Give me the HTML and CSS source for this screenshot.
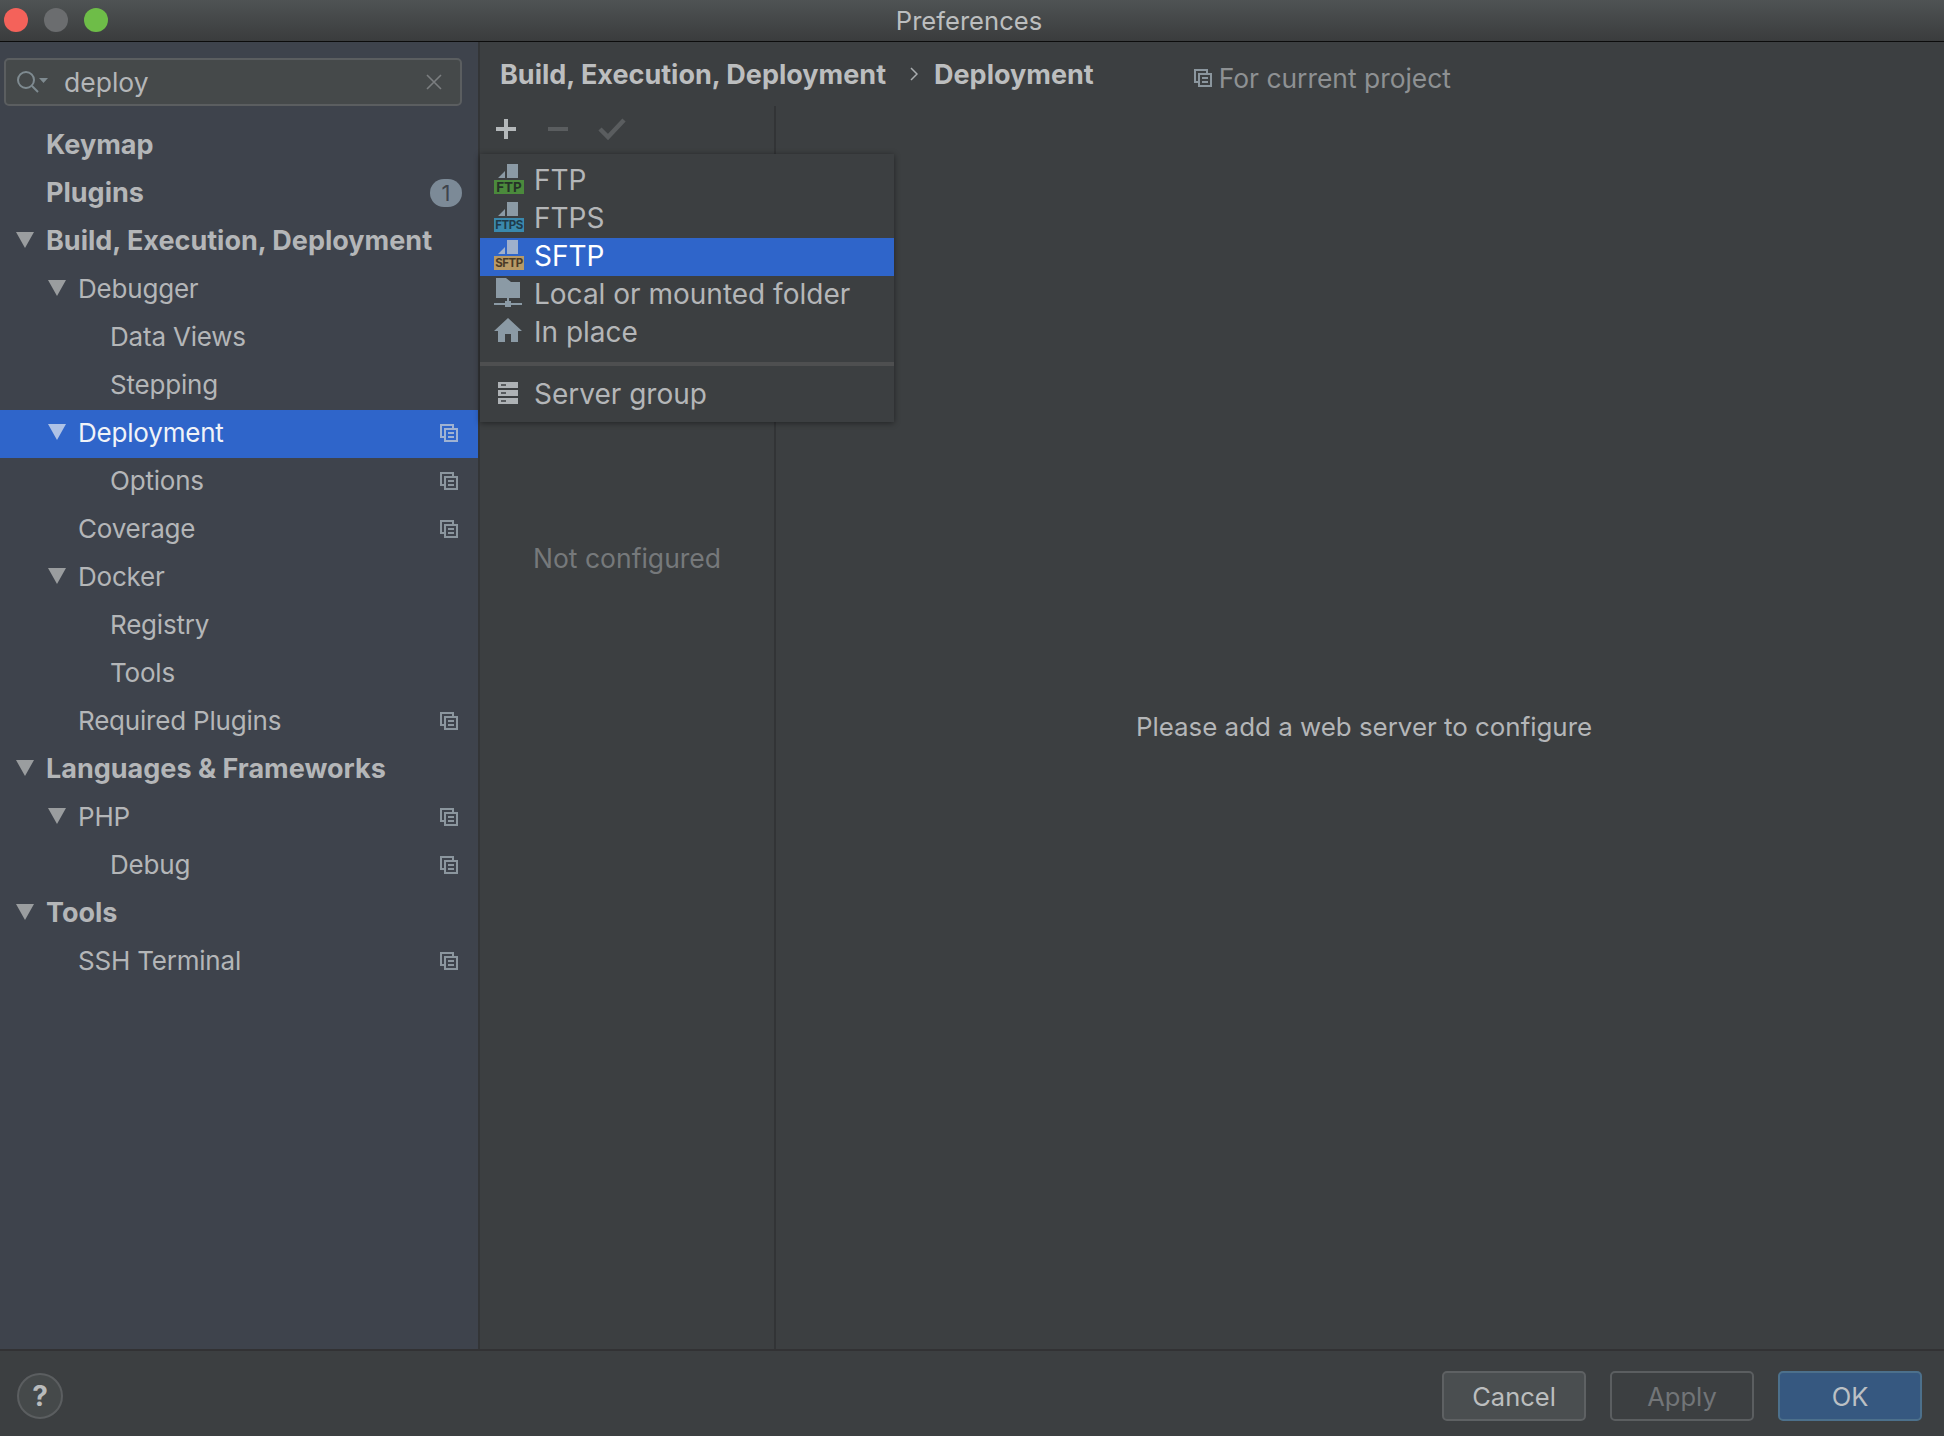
FILE: index.html
```html
<!DOCTYPE html>
<html lang="en">
<head>
<meta charset="utf-8">
<title>Preferences</title>
<link rel="stylesheet" href="styles.css">
</head>
<body>
<svg class="defs" width="0" height="0">
  <symbol id="copy" viewBox="0 0 18 18">
    <path d="M13 4V1H1v12h3" fill="none" stroke="currentColor" stroke-width="2"/>
    <rect x="5" y="5" width="12" height="12" fill="none" stroke="currentColor" stroke-width="2"/>
    <path d="M8 9h6M8 13h6" stroke="currentColor" stroke-width="2"/>
  </symbol>
  <symbol id="tri" viewBox="0 0 18 16">
    <path d="M0 0h18L9 16z" fill="currentColor"/>
  </symbol>
  <symbol id="doc" viewBox="0 0 20 14">
    <path d="M0 14 7 7v7zM9 0h11v14H9z" fill="currentColor"/>
  </symbol>
</svg>
<div class="app">
  <header class="titlebar">
    <div class="lights"><i class="light red"></i><i class="light gray"></i><i class="light green"></i></div>
    <div class="title">Preferences</div>
  </header>
  <div class="body">
    <aside class="sidebar">
      <div class="search">
        <svg class="search-icon" width="34" height="24" viewBox="0 0 34 24"><circle cx="10" cy="10" r="8" fill="none" stroke="#7f8b91" stroke-width="2"/><path d="m16 16 6 6" stroke="#7f8b91" stroke-width="2"/><path d="M23 8h9l-4.500 5z" fill="#7f8b91"/></svg>
        <span class="search-text">deploy</span>
        <svg class="clear" width="16" height="16" viewBox="0 0 16 16"><path d="m1 1 14 14M15 1 1 15" stroke="#7b7e80" stroke-width="1.600"/></svg>
      </div>
      <nav class="tree">
        <div class="row l0 bold"><span class="label">Keymap</span></div>
        <div class="row l0 bold"><span class="label">Plugins</span><span class="badge">1</span></div>
        <div class="row l0 bold"><svg class="tri"><use href="#tri"/></svg><span class="label">Build, Execution, Deployment</span></div>
        <div class="row l1"><svg class="tri"><use href="#tri"/></svg><span class="label">Debugger</span></div>
        <div class="row l2"><span class="label">Data Views</span></div>
        <div class="row l2"><span class="label">Stepping</span></div>
        <div class="row l1 selected"><svg class="tri"><use href="#tri"/></svg><span class="label">Deployment</span><svg class="copy"><use href="#copy"/></svg></div>
        <div class="row l2"><span class="label">Options</span><svg class="copy"><use href="#copy"/></svg></div>
        <div class="row l1"><span class="label">Coverage</span><svg class="copy"><use href="#copy"/></svg></div>
        <div class="row l1"><svg class="tri"><use href="#tri"/></svg><span class="label">Docker</span></div>
        <div class="row l2"><span class="label">Registry</span></div>
        <div class="row l2"><span class="label">Tools</span></div>
        <div class="row l1"><span class="label">Required Plugins</span><svg class="copy"><use href="#copy"/></svg></div>
        <div class="row l0 bold"><svg class="tri"><use href="#tri"/></svg><span class="label">Languages &amp; Frameworks</span></div>
        <div class="row l1"><svg class="tri"><use href="#tri"/></svg><span class="label">PHP</span><svg class="copy"><use href="#copy"/></svg></div>
        <div class="row l2"><span class="label">Debug</span><svg class="copy"><use href="#copy"/></svg></div>
        <div class="row l0 bold"><svg class="tri"><use href="#tri"/></svg><span class="label">Tools</span></div>
        <div class="row l1"><span class="label">SSH Terminal</span><svg class="copy"><use href="#copy"/></svg></div>
      </nav>
    </aside>
    <main class="main">
      <div class="crumbs">
        <span class="crumb">Build, Execution, Deployment</span>
        <svg class="chev" width="8" height="14" viewBox="0 0 8 14"><path d="m1 1 6 6-6 6" fill="none" stroke="#a9adaf" stroke-width="1.500"/></svg>
        <span class="crumb">Deployment</span>
        <span class="scope"><svg class="copy scope-icon"><use href="#copy"/></svg>For current project</span>
      </div>
      <div class="split">
        <section class="servers">
          <div class="toolbar">
            <svg width="20" height="20" viewBox="0 0 20 20"><path d="M10 0v20M0 10h20" stroke="#b4b8ba" stroke-width="4"/></svg>
            <svg width="20" height="20" viewBox="0 0 20 20"><path d="M0 10h20" stroke="#5a5d5f" stroke-width="4"/></svg>
            <svg class="check" width="28" height="22" viewBox="0 0 28 22"><path d="m2 11 8 8L26 2" fill="none" stroke="#5a5d5f" stroke-width="4.500"/></svg>
          </div>
          <div class="not-configured">Not configured</div>
        </section>
        <section class="details">Please add a web server to configure</section>
      </div>
    </main>
  </div>
  <footer class="footer">
    <button class="help">?</button>
    <div class="buttons">
      <button class="btn cancel">Cancel</button>
      <button class="btn apply">Apply</button>
      <button class="btn ok">OK</button>
    </div>
  </footer>
</div>

<div class="menu">
  <div class="item">
    <span class="ficon"><svg class="fdoc"><use href="#doc"/></svg><b class="tag green-tag">FTP</b></span>FTP
  </div>
  <div class="item">
    <span class="ficon"><svg class="fdoc"><use href="#doc"/></svg><b class="tag blue-tag">FTPS</b></span>FTPS
  </div>
  <div class="item active">
    <span class="ficon"><svg class="fdoc"><use href="#doc"/></svg><b class="tag tan-tag">SFTP</b></span>SFTP
  </div>
  <div class="item">
    <span class="ficon"><svg width="28" height="30" viewBox="0 0 28 30"><path d="M2 0h10l5 4h9v16H2z" fill="#8b9aa5"/><path d="M14 20v5" stroke="#8b9aa5" stroke-width="2"/><path d="M0 26h28" stroke="#8b9aa5" stroke-width="2"/><rect x="11" y="23" width="6" height="6" fill="#8b9aa5"/></svg></span>Local or mounted folder
  </div>
  <div class="item">
    <span class="ficon pad4"><svg width="28" height="24" viewBox="0 0 28 24"><path d="M14 0 28 13h-4v11h-7v-8h-6v8H4V13H0z" fill="#8b9aa5"/></svg></span>In place
  </div>
  <div class="sep"></div>
  <div class="item">
    <span class="ficon pad5"><svg width="28" height="24" viewBox="0 0 28 24"><path d="M4 1h20v6H4zM4 9h20v6H4zM4 17h20v6H4z" fill="#aeb2b5"/><path d="M7 4h5M7 12h5M7 20h5" stroke="#3c3f41" stroke-width="1.500"/></svg></span>Server group
  </div>
</div>
</body>
</html>
```
FILE: styles.css
```css
* { box-sizing: border-box; }
html, body { margin: 0; padding: 0; }
body {
  width: 1944px;
  height: 1436px;
  overflow: hidden;
  background: #3c3f41;
  color: #b4b6b8;
  font-family: Inter, "Liberation Sans", sans-serif;
  font-size: 26px;
  position: relative;
}
.defs { position: absolute; }
.app { display: flex; flex-direction: column; height: 1436px; }

.titlebar {
  flex: none;
  height: 42px;
  display: flex;
  align-items: center;
  justify-content: center;
  position: relative;
  background: linear-gradient(#4f5354, #3a3c3d);
  border-bottom: 1.500px solid #0c0c0c;
}
.lights { position: absolute; left: 4px; top: 8px; display: flex; gap: 16px; }
.light { width: 24px; height: 24px; border-radius: 50%; display: block; }
.red { background: #f4625a; }
.gray { background: #6b6d6f; }
.green { background: #6ebd48; }
.title { font-size: 25.600px; color: #bcbebf; padding-right: 6px; }

.body { flex: 1; display: flex; min-height: 0; }

.sidebar {
  flex: none;
  width: 480px;
  background: #3e434c;
  border-right: 2px solid #333537;
  padding-top: 16px;
}
.search {
  margin: 0 16px 0 4px;
  height: 48px;
  display: flex;
  align-items: center;
  padding: 0 18px 0 10px;
  background: #45494a;
  border: 2px solid #5b5e60;
  border-radius: 5px;
}
.search-icon { flex: none; }
.search-text { flex: 1; margin-left: 14px; font-size: 26.500px; }
.tree { margin-top: 16px; }
.row {
  height: 48px;
  display: flex;
  align-items: center;
  position: relative;
  padding-right: 20px;
  padding-bottom: 3px;
  font-size: 26px;
  letter-spacing: -.2px;
}
.row .label { flex: 1; }
.l0 { padding-left: 46px; }
.l1 { padding-left: 78px; }
.l2 { padding-left: 110px; }
.bold { font-weight: 700; font-size: 27px; letter-spacing: 0; }
.selected { background: #2f65ca; color: #f0f3f8; }
.tri {
  position: absolute;
  width: 18px;
  height: 16px;
  margin-left: -30px;
  top: 14px;
  color: #9a9d9f;
}
.selected .tri { color: #aec2e6; }
.copy { width: 18px; height: 18px; color: #8b969e; flex: none; }
.selected .copy { color: #9fb2d2; }
.badge {
  flex: none;
  width: 32px;
  height: 28px;
  margin-right: -4px;
  border-radius: 14px;
  background: #7c8a97;
  color: #3f444c;
  font-size: 22px;
  font-weight: 400;
  display: flex;
  align-items: center;
  justify-content: center;
}

.main { flex: 1; min-width: 0; display: flex; flex-direction: column; }
.crumbs {
  flex: none;
  height: 64px;
  display: flex;
  align-items: center;
  padding-left: 20px;
  font-size: 27px;
}
.crumb { font-weight: 700; color: #bcbebf; }
.chev { margin: 0 16px 0 24px; }
.scope {
  margin-left: 100px;
  margin-top: 8px;
  display: flex;
  align-items: center;
  font-size: 26.400px;
  color: #8e9193;
}
.scope-icon { margin-right: 7px; }

.split { flex: 1; display: flex; min-height: 0; }
.servers { flex: none; width: 296px; border-right: 2px solid #323436; }
.toolbar { display: flex; align-items: center; gap: 32px; height: 46px; padding-left: 16px; }
.check { margin-left: -2px; }
.not-configured { margin-top: 390px; text-align: center; color: #76797b; font-size: 26.500px; }
.details {
  flex: 1;
  display: flex;
  align-items: center;
  justify-content: center;
  padding: 0 0 2px 8px;
  font-size: 25.900px;
  color: #b4b6b8;
}

.footer {
  flex: none;
  height: 87px;
  border-top: 2px solid #323234;
  display: flex;
  align-items: center;
  justify-content: space-between;
  padding: 5px 22px 0 17px;
}
.help {
  width: 46px;
  height: 46px;
  border-radius: 50%;
  background: #45494a;
  border: 2px solid #5b5e60;
  color: #b9bbbc;
  font: 700 28px Inter, "Liberation Sans", sans-serif;
  padding: 0;
}
.buttons { display: flex; gap: 24px; }
.btn {
  width: 144px;
  height: 50px;
  border-radius: 5px;
  font: 400 25.500px Inter, "Liberation Sans", sans-serif;
  padding: 0;
}
.cancel { background: #4a4e50; border: 2px solid #5e6163; color: #bcbebf; }
.apply { background: #3c3f41; border: 2px solid #5b5e60; color: #727578; }
.ok { background: #365880; border: 2px solid #4c708c; color: #bcc0c4; }

.menu {
  position: absolute;
  left: 480px;
  top: 154px;
  width: 414px;
  height: 268px;
  padding-top: 8px;
  background: #3c3f41;
  box-shadow: 0 1px 6px rgba(0, 0, 0, .45);
  font-size: 28px;
}
.item {
  height: 38px;
  display: flex;
  align-items: center;
  padding: 0 0 2px 14px;
  color: #b4b6b8;
}
.item.active { background: #2f65ca; color: #fff; }
.ficon {
  flex: none;
  width: 40px;
  height: 38px;
  margin-bottom: -2px;
  display: flex;
  flex-direction: column;
  align-items: flex-start;
  padding-top: 2px;
}
.pad4 { padding-top: 4px; }
.pad5 { padding-top: 5px; }
.fdoc { width: 20px; height: 14px; color: #8b9aa5; margin: 0 0 2px 4px; flex: none; }
.active .fdoc { color: #9fb0cc; }
.tag {
  display: block;
  width: 30px;
  height: 14px;
  font: 700 13.500px/14px Inter, "Liberation Sans", sans-serif;
  text-align: center;
  color: #263228;
  white-space: nowrap;
  overflow: hidden;
}
.green-tag { background: #4b8a3c; }
.blue-tag { background: #3a89ad; color: #1f3a4a; font-size: 11.500px; letter-spacing: -.5px; }
.tan-tag { background: #b89a66; color: #4a3a26; font-size: 11.500px; letter-spacing: -.5px; }
.sep { height: 4px; background: #4e4f50; margin: 10px 0; }
```
